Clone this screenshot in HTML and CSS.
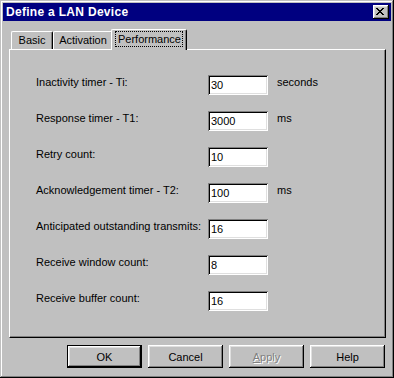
FILE: index.html
```html
<!DOCTYPE html>
<html>
<head>
<meta charset="utf-8">
<title>Define a LAN Device</title>
<link rel="stylesheet" href="styles.css">
</head>
<body>
<div class="window">
  <div class="caption">
    <span class="caption-title">Define a LAN Device</span>
    <span class="close-btn">
      <svg width="8" height="7" viewBox="0 0 8 7" shape-rendering="crispEdges"><path fill="#000" d="M0 0h2v1H0z M6 0h2v1H6z M1 1h2v1H1z M5 1h2v1H5z M2 2h4v1H2z M3 3h2v1H3z M2 4h4v1H2z M1 5h2v1H1z M5 5h2v1H5z M0 6h2v1H0z M6 6h2v1H6z"/></svg>
    </span>
  </div>
  <div class="content">
    <div class="tabs">
      <div class="tab tab-basic">Basic</div>
      <div class="tab tab-activation">Activation</div>
      <div class="tab tab-selected"><span class="focus">Performance</span></div>
    </div>
    <div class="panel">
      <div class="form">
        <label class="label">Inactivity timer - Ti:</label>
        <input class="field" type="text" value="30">
        <span class="unit">seconds</span>

        <label class="label">Response timer - T1:</label>
        <input class="field" type="text" value="3000">
        <span class="unit">ms</span>

        <label class="label">Retry count:</label>
        <input class="field" type="text" value="10">
        <span class="unit"></span>

        <label class="label">Acknowledgement timer - T2:</label>
        <input class="field" type="text" value="100">
        <span class="unit">ms</span>

        <label class="label">Anticipated outstanding transmits:</label>
        <input class="field" type="text" value="16">
        <span class="unit"></span>

        <label class="label">Receive window count:</label>
        <input class="field" type="text" value="8">
        <span class="unit"></span>

        <label class="label">Receive buffer count:</label>
        <input class="field" type="text" value="16">
        <span class="unit"></span>
      </div>
    </div>
    <div class="buttons">
      <button class="btn btn-default">OK</button>
      <button class="btn">Cancel</button>
      <button class="btn btn-disabled"><u>A</u>pply</button>
      <button class="btn">Help</button>
    </div>
  </div>
</div>
</body>
</html>
```
FILE: styles.css
```css
* { box-sizing: border-box; }
html, body { margin: 0; padding: 0; }
body {
  width: 394px;
  height: 378px;
  overflow: hidden;
  background: #c0c0c0;
  font-family: "Liberation Sans", Arial, sans-serif;
  font-size: 11px;
  line-height: 13px;
  color: #000;
}
.window {
  width: 394px;
  height: 378px;
  padding: 3px;
  background: #c0c0c0;
  box-shadow: inset -1px -1px #000, inset 1px 1px #c0c0c0, inset -2px -2px #808080, inset 2px 2px #fff;
  display: flex;
  flex-direction: column;
}
.caption {
  height: 18px;
  background: #000080;
  color: #fff;
  font-weight: bold;
  font-size: 12px;
  display: flex;
  align-items: center;
  justify-content: space-between;
  padding: 0 2px 0 3px;
}
.caption-title { letter-spacing: 0.3px; }
.close-btn {
  width: 16px;
  height: 14px;
  background: #c0c0c0;
  box-shadow: inset -1px -1px #000, inset 1px 1px #fff, inset -2px -2px #808080, inset 2px 2px #dfdfdf;
  display: flex;
  align-items: center;
  justify-content: center;
  padding-right: 2px;
  padding-bottom: 1px;
}
.close-btn svg { display: block; }
.content {
  flex: 1;
  display: flex;
  flex-direction: column;
  padding: 8px 5px 0 6px;
}
.tabs {
  display: flex;
  align-items: flex-end;
  height: 20px;
  padding-left: 2px;
}
.tab {
  height: 18px;
  border-top: 1px solid #fff;
  border-left: 1px solid #fff;
  border-right: 1px solid #000;
  border-radius: 2px 2px 0 0;
  box-shadow: inset -1px 0 #808080;
  background: #c0c0c0;
  text-align: center;
  padding-top: 2px;
}
.tab-basic { width: 42px; }
.tab-activation { width: 60px; }
.tab-selected {
  position: relative;
  z-index: 1;
  width: 76px;
  height: 21px;
  margin-left: -2px;
  margin-bottom: -1px;
  padding-top: 1px;
}
.focus {
  display: inline-block;
  padding: 2px 2px 1px 3px;
  outline: 1px dotted #000;
  outline-offset: -1px;
  line-height: 13px;
}
.panel {
  height: 289px;
  background: #c0c0c0;
  border-top: 1px solid #fff;
  border-left: 1px solid #fff;
  border-right: 1px solid #000;
  border-bottom: 1px solid #000;
  box-shadow: inset -1px -1px #808080;
  padding: 25px 0 0 26px;
}
.form {
  display: grid;
  grid-template-columns: 172px 60px auto;
  grid-auto-rows: 20px;
  row-gap: 16px;
}
.label, .unit {
  padding-top: 1px;
  white-space: nowrap;
}
.unit { padding-left: 9px; }
.field {
  width: 60px;
  height: 20px;
  margin: 0;
  border: none;
  outline: none;
  background: #fff;
  font-family: "Liberation Sans", Arial, sans-serif;
  font-size: 11px;
  color: #000;
  padding: 0 2px 0 3px;
  box-shadow: inset 1px 1px #808080, inset -1px -1px #fff, inset 2px 2px #000, inset -2px -2px #dfdfdf;
}
.buttons {
  display: flex;
  justify-content: flex-end;
  gap: 6px;
  margin-top: 7px;
  padding-right: 1px;
}
.btn {
  width: 75px;
  height: 23px;
  margin: 0;
  padding: 0;
  border: none;
  background: #c0c0c0;
  font-family: "Liberation Sans", Arial, sans-serif;
  font-size: 11px;
  color: #000;
  box-shadow: inset -1px -1px #000, inset 1px 1px #fff, inset -2px -2px #808080, inset 2px 2px #dfdfdf;
}
.btn-default {
  border: 1px solid #000;
}
.btn-disabled {
  color: #808080;
  text-shadow: 1px 1px #fff;
}
```
